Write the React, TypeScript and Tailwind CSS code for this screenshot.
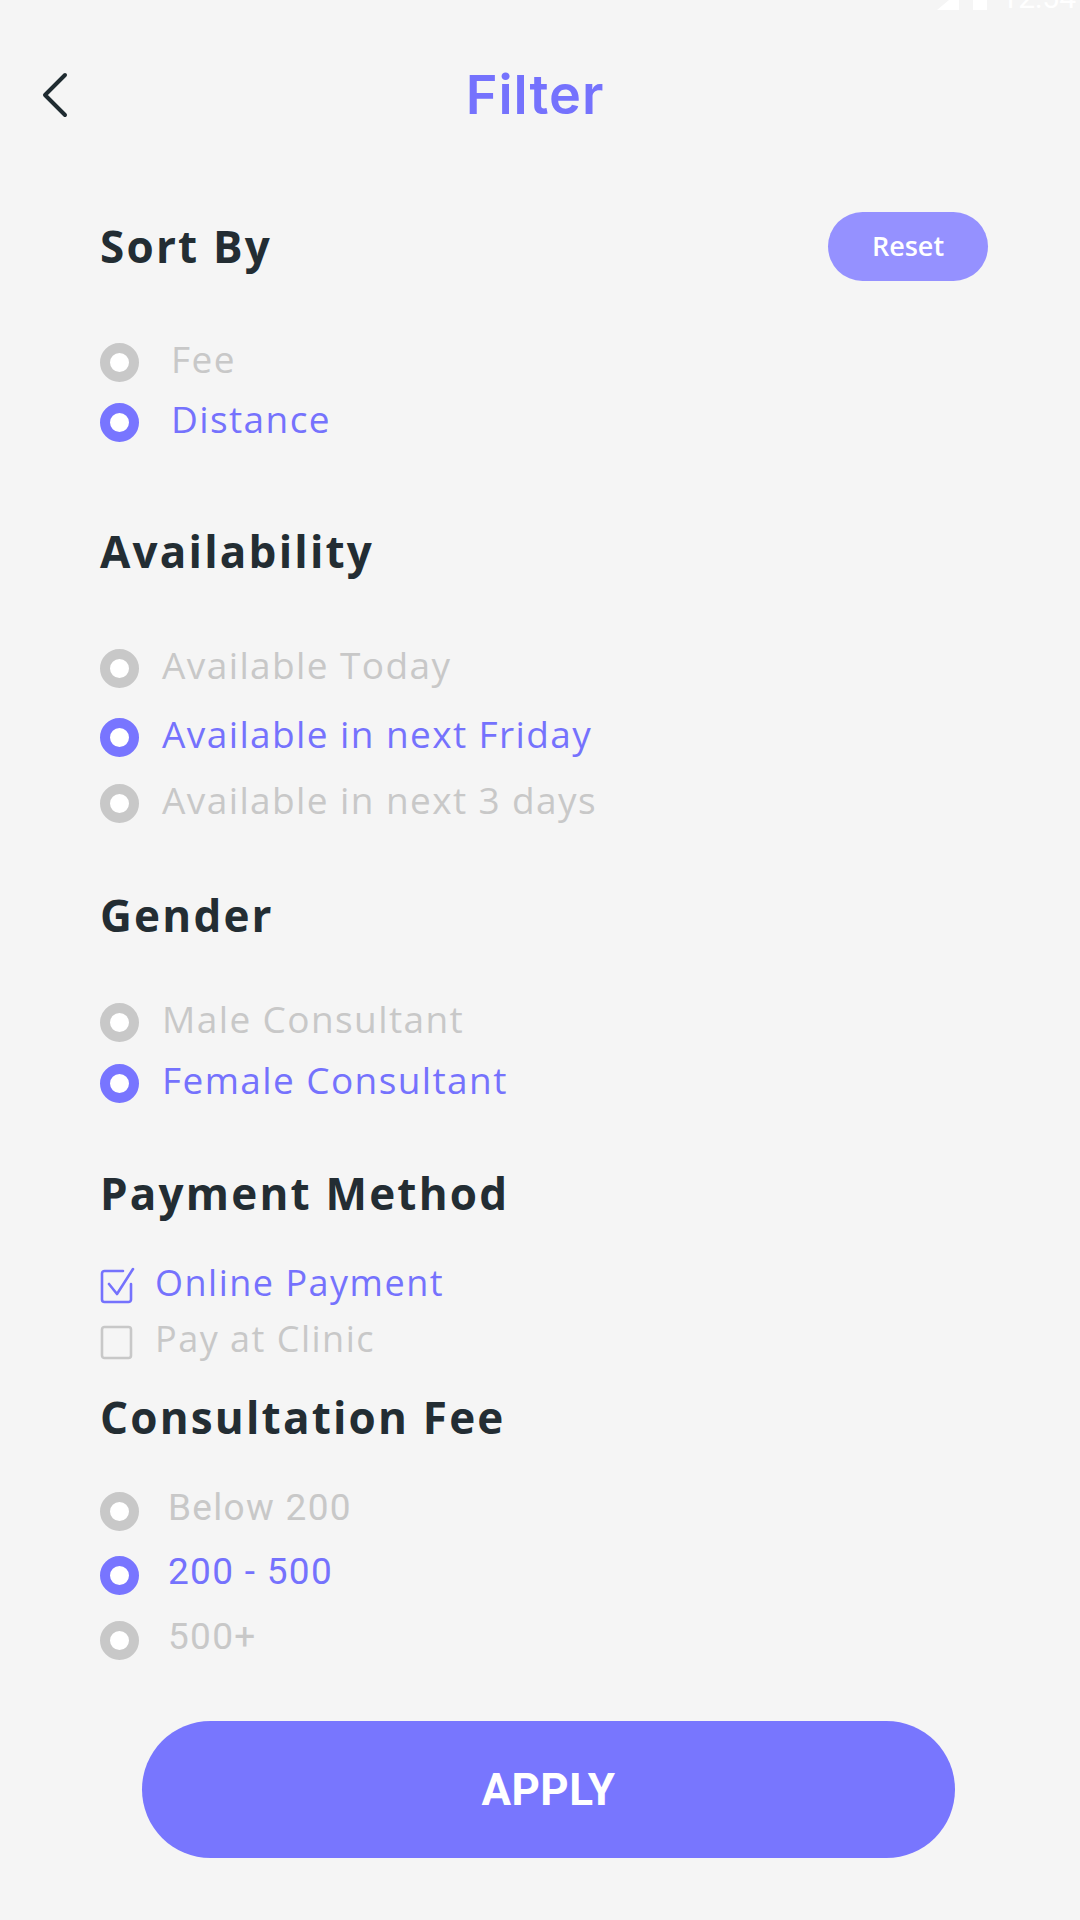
import React from "react";

const PURPLE = "text-[#7572fd]";
const GRAY = "text-[#c8c8c8]";

function Radio({ on }: { on?: boolean }) {
  return (
    <span
      className={`block h-[39px] w-[39px] shrink-0 rounded-full border-[10px] bg-white ${
        on ? "border-[#7875ff]" : "border-[#c8c8c8]"
      }`}
    />
  );
}

function Heading({ children }: { children: React.ReactNode }) {
  return (
    <h2 className="font-['Open_Sans',sans-serif] text-[44px] font-bold leading-none tracking-[2.2px] text-[#232d33]">
      {children}
    </h2>
  );
}

function Option({
  label,
  on,
  gap,
  mt,
  roboto,
}: {
  label: string;
  on?: boolean;
  gap: string;
  mt: string;
  roboto?: boolean;
}) {
  return (
    <div className={`flex h-[56px] items-center ${gap} ${mt}`}>
      <Radio on={on} />
      <span
        className={`${
          roboto
            ? "font-['Roboto',sans-serif] text-[37px] tracking-[1.3px]"
            : "font-['Open_Sans',sans-serif] text-[37px] tracking-[1.4px]"
        } mb-[7px] leading-none ${on ? PURPLE : GRAY}`}
      >
        {label}
      </span>
    </div>
  );
}

function CheckedBox() {
  return (
    <svg width="36" height="38" viewBox="0 0 36 38" fill="none" className="shrink-0">
      <path
        d="M23 5H4.5a2.5 2.5 0 0 0-2.5 2.5v26a2.5 2.5 0 0 0 2.5 2.5h24a2.5 2.5 0 0 0 2.5-2.5V18"
        stroke="#7572fd"
        strokeWidth="2.6"
        strokeLinecap="round"
      />
      <path
        d="M9 18l8 10L33 3"
        stroke="#7572fd"
        strokeWidth="2.6"
        strokeLinecap="round"
        strokeLinejoin="round"
      />
    </svg>
  );
}

function EmptyBox() {
  return (
    <svg width="36" height="38" viewBox="0 0 36 38" fill="none" className="shrink-0">
      <rect x="2" y="5" width="29" height="31" rx="2.5" stroke="#c8c8c8" strokeWidth="2.6" />
    </svg>
  );
}

export default function App() {
  return (
    <div className="min-h-[1920px] w-[1080px] bg-[#f5f5f5]">
      {/* status bar, mostly cut off */}
      <div className="flex h-[10px] items-end justify-end gap-[14px] overflow-hidden pr-[4px]">
        <svg width="24" height="10" viewBox="0 0 24 10">
          <path d="M24 0V10H2L14 0Z" fill="#ffffff" />
        </svg>
        <div className="h-[10px] w-[14px] bg-white" />
        <span className="-mb-[3px] font-['Roboto',sans-serif] text-[30px] leading-none text-white">
          12:54
        </span>
      </div>

      {/* header */}
      <div className="mt-[35px] grid h-[100px] grid-cols-[1fr_auto_1fr] items-center pl-[41px] pr-[51px]">
        <svg width="28" height="46" viewBox="0 0 28 46" fill="none">
          <path
            d="M24 3L4 23l20 20"
            stroke="#1f2b31"
            strokeWidth="4"
            strokeLinecap="round"
            strokeLinejoin="round"
          />
        </svg>
        <h1 className="font-['Inter',sans-serif] text-[54px] font-semibold leading-none tracking-[1px] text-[#7572fd]">
          Filter
        </h1>
        <div />
      </div>

      <div className="flex flex-col pl-[100px]">
        {/* sort by */}
        <div className="mt-[66px] flex h-[70px] items-center justify-between pr-[92px]">
          <Heading>Sort By</Heading>
          <button className="flex h-[69px] w-[160px] items-center justify-center rounded-full bg-[#9591ff] font-['Open_Sans',sans-serif] text-[27px] font-semibold text-white">
            Reset
          </button>
        </div>
        <Option label="Fee" gap="gap-[32px]" mt="mt-[53px]" />
        <Option label="Distance" on gap="gap-[32px]" mt="mt-[4px]" />

        {/* availability */}
        <div className="mt-[71px] flex h-[60px] items-center">
          <Heading>Availability</Heading>
        </div>
        <Option label="Available Today" gap="gap-[23px]" mt="mt-[59px]" />
        <Option label="Available in next Friday" on gap="gap-[23px]" mt="mt-[13px]" />
        <Option label="Available in next 3 days" gap="gap-[23px]" mt="mt-[10px]" />

        {/* gender */}
        <div className="mt-[54px] flex h-[60px] items-center">
          <Heading>Gender</Heading>
        </div>
        <Option label="Male Consultant" gap="gap-[23px]" mt="mt-[49px]" />
        <Option label="Female Consultant" on gap="gap-[23px]" mt="mt-[5px]" />

        {/* payment */}
        <div className="mt-[52px] flex h-[60px] items-center">
          <Heading>Payment Method</Heading>
        </div>
        <div className="mt-[37px] flex h-[50px] items-center gap-[19px]">
          <CheckedBox />
          <span className={`mb-[4px] font-['Open_Sans',sans-serif] text-[36px] leading-none tracking-[1.5px] ${PURPLE}`}>
            Online Payment
          </span>
        </div>
        <div className="mt-[6px] flex h-[50px] items-center gap-[19px]">
          <EmptyBox />
          <span className={`mb-[4px] font-['Open_Sans',sans-serif] text-[36px] leading-none tracking-[1.5px] ${GRAY}`}>
            Pay at Clinic
          </span>
        </div>

        {/* consultation fee */}
        <div className="mt-[21px] flex h-[60px] items-center">
          <Heading>Consultation Fee</Heading>
        </div>
        <Option label="Below 200" roboto gap="gap-[29px]" mt="mt-[36px]" />
        <Option label="200 - 500" on roboto gap="gap-[29px]" mt="mt-[8px]" />
        <Option label="500+" roboto gap="gap-[29px]" mt="mt-[9px]" />
      </div>

      <button className="ml-[142px] mt-[53px] flex h-[137px] w-[813px] items-center justify-center rounded-full bg-[#7876fe] font-['Roboto',sans-serif] text-[44px] font-bold tracking-[0.5px] text-white">
        APPLY
      </button>
    </div>
  );
}
